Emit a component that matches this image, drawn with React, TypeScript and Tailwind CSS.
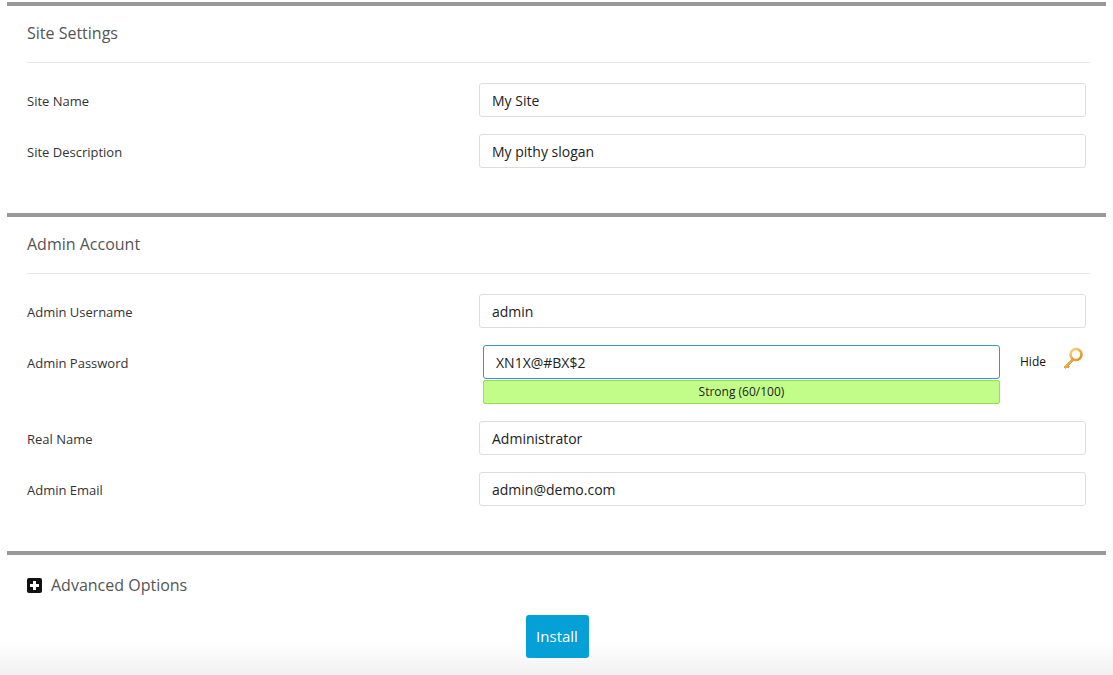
import React from "react";

const Row = ({ label, value, children }: { label: string; value: string; children?: React.ReactNode }) => (
  <div className="flex">
    <div className="w-[456px] pt-[9px] text-[13px] text-[#333]">{label}</div>
    <div className="flex-1">{children ?? (
      <div className="h-[34px] w-[607px] border border-[#ddd] rounded-[3px] px-[12px] flex items-center text-[14px] text-[#222]">{value}</div>
    )}</div>
  </div>
);

const Bar = () => <div className="mx-[7px] h-[4px] bg-[#999]" />;

const Header = ({ t }: { t: string }) => (
  <div className="mx-[27px] w-[1063px] pt-[15px] pb-[17px] border-b border-[#e8e8e8] text-[16px] leading-[24px] text-[#555]">{t}</div>
);

export default function App() {
  return (
    <div className="w-[1113px] h-[675px] overflow-hidden bg-white pt-[2px]" style={{ fontFamily: '"Open Sans", sans-serif' }}>
      <Bar />
      <Header t="Site Settings" />
      <div className="px-[27px] pt-[20px] flex flex-col gap-[17px]">
        <Row label="Site Name" value="My Site" />
        <Row label="Site Description" value="My pithy slogan" />
      </div>
      <div className="h-[45px]" />
      <Bar />
      <Header t="Admin Account" />
      <div className="px-[27px] pt-[20px] flex flex-col gap-[17px]">
        <Row label="Admin Username" value="admin" />
        <Row label="Admin Password" value="">
          <div className="flex">
            <div className="w-[517px]">
              <div className="h-[34px] border border-[#3d8fd6] rounded-[3px] px-[12px] flex items-center text-[14px] text-[#222]">XN1X@#BX$2</div>
              <div className="h-[24px] mt-[1px] bg-[#c2fd89] border border-[#8ee44a] rounded-[2px] flex items-center justify-center text-[12px] text-[#222]">Strong (60/100)</div>
            </div>
            <div className="ml-[20px] h-[34px] flex items-center text-[12px] text-[#111]">Hide</div>
            <svg className="ml-[14px] mt-[2px]" width="24" height="24" viewBox="0 0 24 24">
              <defs>
                <linearGradient id="g" x1="0" y1="0" x2="1" y2="1">
                  <stop offset="0" stopColor="#fbd77a" />
                  <stop offset="1" stopColor="#d98a1a" />
                </linearGradient>
              </defs>
              <circle cx="16" cy="7.5" r="5.5" fill="none" stroke="url(#g)" strokeWidth="2.6" />
              <path d="M12.5 11.5 L4 20 L5.5 21.5 L7 20 L8 21 L9.5 19.5 L8.5 18.5 L14 13 Z" fill="url(#g)" stroke="#c47b18" strokeWidth="0.6" />
            </svg>
          </div>
        </Row>
        <Row label="Real Name" value="Administrator" />
        <Row label="Admin Email" value="admin@demo.com" />
      </div>
      <div className="h-[45px]" />
      <Bar />
      <div className="relative h-[123px] bg-gradient-to-b from-white from-[70%] to-[#f0f0f0]">
        <div className="px-[27px] pt-[18px] flex items-center gap-[9px] text-[16px] leading-[24px] text-[#555]">
          <span className="w-[15px] h-[15px] bg-[#111] rounded-[2px] flex items-center justify-center">
            <svg width="11" height="11" viewBox="0 0 11 11"><path d="M4 1h3v3h3v3H7v3H4V7H1V4h3z" fill="#fff" /></svg>
          </span>
          Advanced Options
        </div>
        <div className="flex justify-center pl-[1px] mt-[18px]">
          <button className="w-[63px] h-[43px] bg-[#05a0d6] text-white text-[15px] rounded-[3px]">Install</button>
        </div>
      </div>
    </div>
  );
}
